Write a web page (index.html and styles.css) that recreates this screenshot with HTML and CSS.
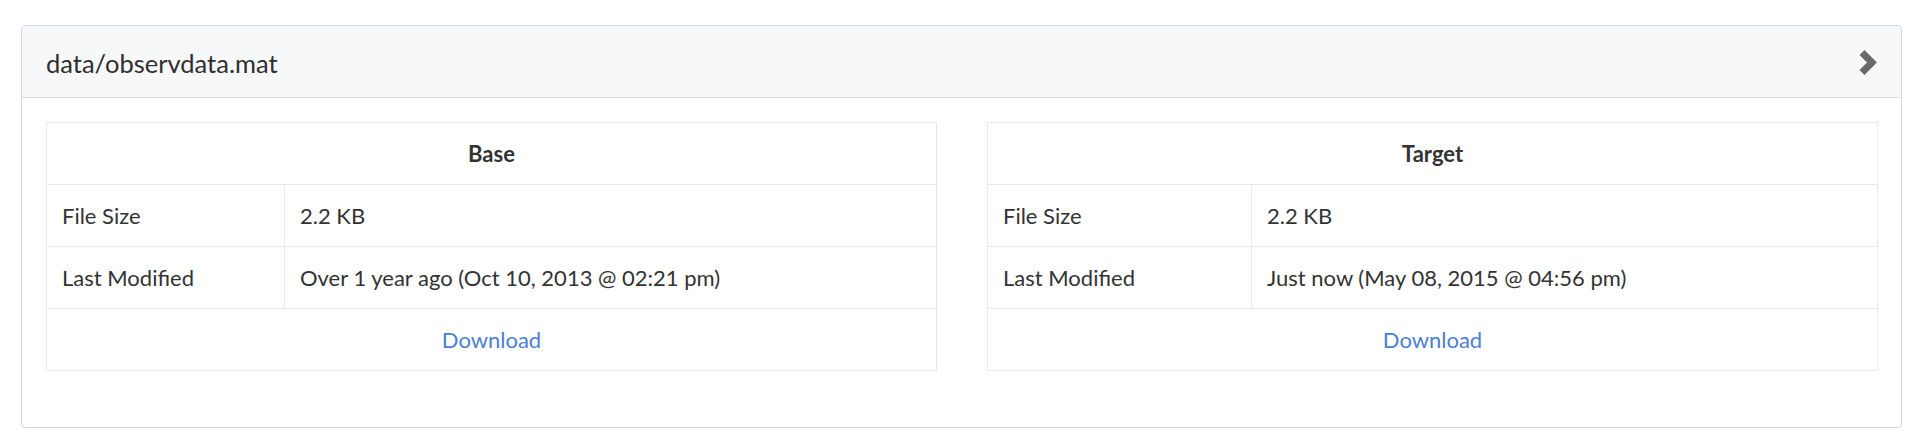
FILE: index.html
```html
<!DOCTYPE html>
<html>
<head>
<meta charset="utf-8">
<link rel="stylesheet" href="styles.css">
</head>
<body>
<div class="page">
  <div class="panel">
    <div class="panel-heading">
      <span class="panel-title">data/observdata.mat</span>
      <svg class="chevron" width="20" height="27" viewBox="0 0 20 27"><polyline points="4,3.5 14,13.5 4,23.5" fill="none" stroke="#6a6a6a" stroke-width="7" stroke-linejoin="miter"/></svg>
    </div>
    <div class="panel-body">
      <table class="info base">
        <tr><th colspan="2">Base</th></tr>
        <tr><td class="label">File Size</td><td>2.2 KB</td></tr>
        <tr><td class="label">Last Modified</td><td>Over 1 year ago (Oct 10, 2013 @ 02:21 pm)</td></tr>
        <tr><td colspan="2" class="center"><a href="#">Download</a></td></tr>
      </table>
      <table class="info target">
        <tr><th colspan="2">Target</th></tr>
        <tr><td class="label">File Size</td><td>2.2 KB</td></tr>
        <tr><td class="label">Last Modified</td><td>Just now (May 08, 2015 @ 04:56 pm)</td></tr>
        <tr><td colspan="2" class="center"><a href="#">Download</a></td></tr>
      </table>
    </div>
  </div>
</div>
</body>
</html>
```

FILE: styles.css
```css
* { box-sizing: border-box; }
html, body { margin: 0; padding: 0; background: #ffffff; }
body {
  font-family: Lato, "Open Sans", "Liberation Sans", sans-serif;
  color: #333333;
}
.page {
  padding: 25px 18px 0 21px;
}
.panel {
  border: 1px solid #d5d8dd;
  border-radius: 4px;
  background: #fff;
}
.panel-heading {
  height: 72px;
  background: #f7f8fa;
  border-bottom: 1px solid #d9dce1;
  border-radius: 4px 4px 0 0;
  padding: 0 23px 0 24px;
  display: flex;
  align-items: center;
  justify-content: space-between;
}
.panel-title {
  font-size: 25.5px;
  color: #2f2f2f;
  position: relative;
  top: 1px;
}
.chevron { display: block; margin-top: 2px; }
.panel-body {
  padding: 24px 23px 56px 24px;
  display: grid;
  grid-template-columns: 1fr 1fr;
  column-gap: 50px;
}
.info {
  width: 100%;
  border-collapse: collapse;
  border: 1px solid #e6e9f0;
  font-size: 22px;
}
.info th, .info td {
  border: 1px solid #e6e9f0;
  padding: 15px 15px;
  line-height: 31px;
  text-align: left;
  font-weight: normal;
}
.info th {
  text-align: center;
  font-weight: bold;
}
.info td.center { text-align: center; }
.base .label { width: 238px; }
.target .label { width: 264px; }
.info a {
  color: #4a80d6;
  text-decoration: none;
}
```
